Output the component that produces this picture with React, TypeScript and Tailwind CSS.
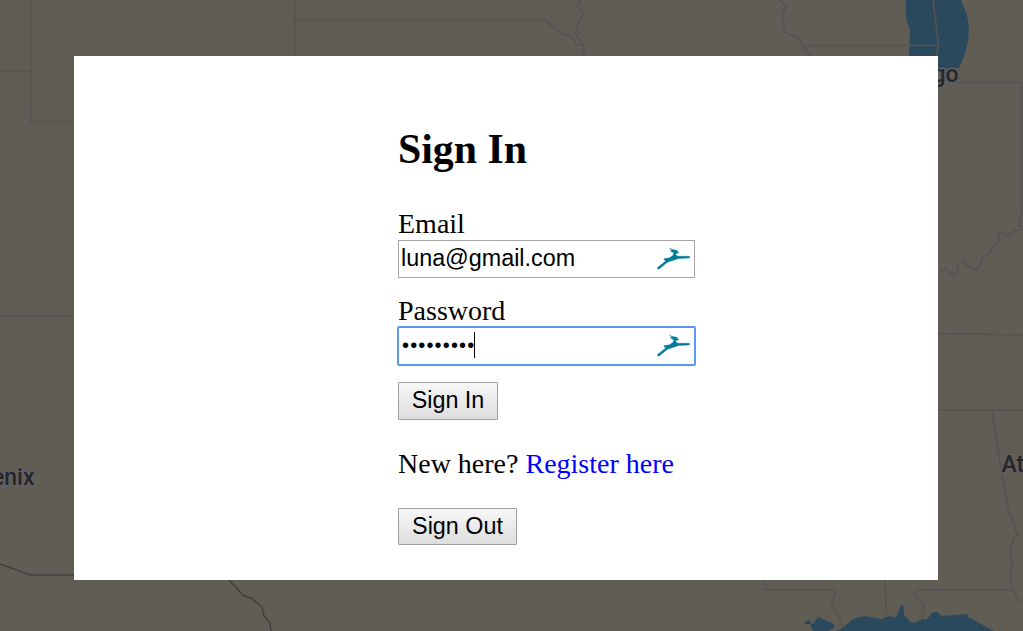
import React from "react";

const STATE_LINES = [
  "M0 71H31M31 0V121.500H80",
  "M295 0V60M296 19.500H545L560 33L573 38L576 45H583",
  "M579 0L580 4L577 5L578 8L582 9L583 14L575 33L584 47L583 52L586 57",
  "M780 0L786 7L782 14L785 32L799 38L802 45L811 56M802 45.500H938",
  "M933 0L938.500 45L936 57M955 82.500H1021.500V215L1019 218L1021 222L1019 226L1023 228",
  "M1023 230H1016L1008 235L1003 232.500L998.500 233V243L993 247L988.500 254L983 256L979 267L975 270L967 266L963 259L964 262L959 263L957 272L953 276L952 273L949 273L946 268L938 273",
  "M938 333.500L1023 335M0 316H75M938 410H1023",
  "M992 410L1001 470L1008 509L1015 526L1015 530L1018 534L1013 539L1012 546L1010 551L1012 567L1010 581L1019 602H1023",
  "M764 579L767 588L763 590H836L831.500 604L838 614L841 624L845 627M885 579L886.500 617",
  "M1014 590H917L915 596L924 605L922 611L925 615L920 620",
];

function MapBackdrop() {
  return (
    <svg className="absolute inset-0 h-full w-full" viewBox="0 0 1023 631" aria-hidden="true">
      <g fill="#2b495d">
        <path d="M906 0L905.500 12L907 22L910 30L909 57L938 70L959 68L965 54L968 42L969 28L967 15L961 0Z" />
        <path d="M805 621L810 620L811 624H813L818 617L834 624V628L828 631H813L810 624H805Z" />
        <path d="M836 631L844 627L853 619L864 616L881 619L890 616L896 618L901 605H903.500L904 615L911 622.500H916L922 619H927L933 612H938L941 616L968 614V617L994 631Z" />
      </g>
      <g fill="none" stroke="#545456" strokeWidth="1.700" strokeLinejoin="round">
        {STATE_LINES.map((d) => (
          <path key={d} d={d} />
        ))}
      </g>
      <path
        d="M0 564L30 575H75M228 579L244 596L251 598L262 607L264 616L270 623L271 631"
        fill="none"
        stroke="#3f3f3e"
        strokeWidth="1.500"
      />
      <g
        className="font-['Roboto',sans-serif] text-[23px] font-medium"
        fill="#262626"
        stroke="#606066"
        strokeWidth="3"
        strokeLinejoin="round"
        paintOrder="stroke"
      >
        <text x="958.500" y="82" textAnchor="end">Chicago</text>
        <text x="34.500" y="485" textAnchor="end">Phoenix</text>
        <text x="1001.500" y="471.500">Atlanta</text>
      </g>
    </svg>
  );
}

function RunnerIcon() {
  return (
    <svg
      className="pointer-events-none absolute top-2 right-[5px] h-[22px] w-[33px]"
      viewBox="0 0 33 22"
      fill="#007c97"
      stroke="#007c97"
      strokeWidth="0.400"
      aria-hidden="true"
    >
      <path d="M12.500 0L14.500 1.200L20.500 2.600L20 4H21.600L21.400 5L19 5.200L18.800 6.800L20.600 8.200L32.500 8.300V10L21.500 10.600L13.500 13.200L10.500 14.200L1.800 21.300L0.500 20.700L0.600 19.600L9 12.800L7 11.800V10.700L12.500 9.800L16 7.600L16.800 4.700L13.300 2.900L15 2.600Z" />
    </svg>
  );
}

const inputStyle =
  "block h-[38px] w-[297px] border bg-white pr-10 pb-[2px] font-['Liberation_Sans',Arial,sans-serif] text-black outline-none";

const buttonStyle =
  "block rounded-[1px] border border-[#a0a0a0] bg-linear-to-b from-[#f7f7f7] to-[#dddddd] text-center font-['Liberation_Sans',Arial,sans-serif] text-[23.333px] leading-none text-black";

export default function App() {
  return (
    <main className="relative h-[631px] w-[1023px] overflow-hidden bg-[#605d55] pt-14 pl-[74px]">
      <MapBackdrop />
      <section className="relative h-[524px] w-[864px] bg-white pt-[69px] pl-[324px] font-['Liberation_Serif','Times_New_Roman',serif] text-[28px] leading-8 text-black">
        <h2 className="text-[41.800px] leading-[48px] font-bold">Sign In</h2>
        <form className="mt-[35px]" onSubmit={(e) => e.preventDefault()}>
          <label className="block" htmlFor="email">Email</label>
          <div className="relative w-[297px]">
            <input
              id="email"
              type="text"
              defaultValue="luna@gmail.com"
              className={`${inputStyle} rounded-none border-[#a6a6a6] pl-[2px] text-[23.333px]`}
            />
            <RunnerIcon />
          </div>
          <label className="mt-[17px] block" htmlFor="password">Password</label>
          <div className="relative w-[297px]">
            <input
              id="password"
              type="password"
              defaultValue="password1"
              className={`${inputStyle} rounded-[1px] border-[#5b98f5] pl-[3px] text-[20px] tracking-[1.150px] ring-1 ring-[#5b98f5]`}
            />
            <span className="absolute top-[5px] left-[76px] h-[26px] w-px bg-black" />
            <RunnerIcon />
          </div>
          <button type="submit" className={`${buttonStyle} mt-[17px] h-[38px] w-[100px]`}>Sign In</button>
        </form>
        <p className="mt-7">
          New here? <a href="#register" className="text-[#0000ff]">Register here</a>
        </p>
        <button type="button" className={`${buttonStyle} mt-7 h-[37px] w-[119px]`}>Sign Out</button>
      </section>
    </main>
  );
}
